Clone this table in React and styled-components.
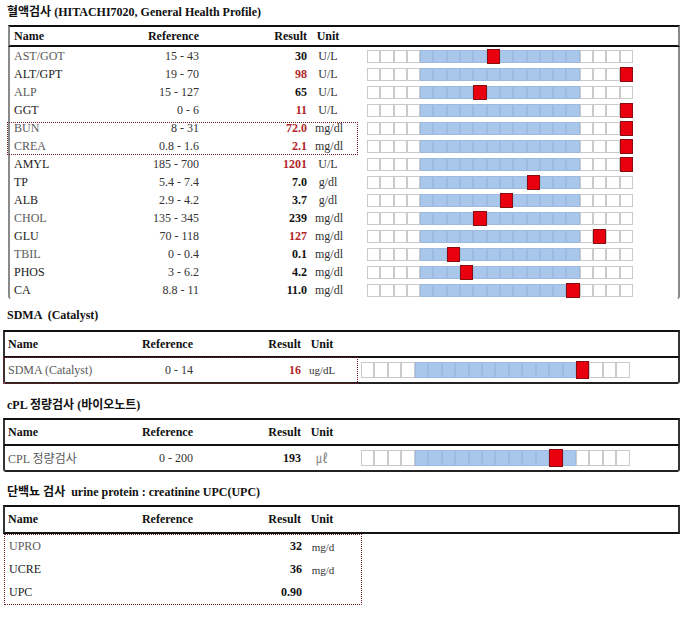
import styled, { createGlobalStyle } from 'styled-components'

const GlobalStyle = createGlobalStyle`
  body {
    margin: 0;
    background: #fff;
    font-family: "Liberation Serif", "Noto Sans CJK KR", serif;
    color: #222;
  }
`

const Page = styled.div`
  padding-top: 4px;
  padding-bottom: 8px;
  width: 695px;
`

const SectionTitle = styled.h2`
  margin: ${({ $top }) => $top}px 0 ${({ $bottom }) => $bottom}px 7px;
  font-size: 12px;
  line-height: 16px;
  font-weight: 700;
  color: #111;
  white-space: pre;
`

const Table = styled.div`
  margin-left: ${({ $left }) => $left}px;
  width: ${({ $width }) => $width}px;
`

const Head = styled.div`
  display: grid;
  grid-template-columns: 110px 75px 108px 60px 1fr;
  align-items: center;
  height: ${({ $h }) => $h}px;
  padding-left: ${({ $pad }) => $pad}px;
  border-top: 2px solid #111;
  border-bottom: 2px solid #111;
  border-left: 2px solid ${({ $side }) => $side};
  border-right: 2px solid ${({ $side }) => $side};
  font-weight: 700;
  font-size: 12px;
  color: #111;
`

const Body = styled.div`
  position: relative;
  border-left: 2px solid ${({ $side }) => $side || 'transparent'};
  border-right: 2px solid ${({ $side }) => $side || 'transparent'};
  border-bottom: ${({ $closed }) => ($closed ? '2px solid #222' : 'none')};
  border-radius: 0 0 3px 3px;
`

const Group = styled.div`
  width: 358px;
  box-sizing: border-box;
  margin-left: 1px;
  border: 1px dotted #7a1d22;
`

const Row = styled.div`
  display: grid;
  grid-template-columns: 110px 75px 108px 60px 1fr;
  align-items: center;
  height: ${({ $h }) => $h}px;
  padding-left: ${({ $pad }) => $pad}px;
  font-size: 12px;
`

const Name = styled.span`
  color: ${({ $dim }) => ($dim ? '#5a5a5a' : '#222')};
  white-space: nowrap;
`

const Ref = styled.span`
  text-align: right;
  color: ${({ $head }) => ($head ? '#111' : '#333')};
  white-space: nowrap;
`

const Result = styled.span`
  text-align: right;
  font-weight: 700;
  color: ${({ $high }) => ($high ? '#b0262b' : '#111')};
`

const Unit = styled.span`
  margin-left: 8px;
  width: 26px;
  text-align: center;
  white-space: nowrap;
  font-size: ${({ $small }) => ($small ? '11px' : '12px')};
  color: ${({ $faint, $head }) => ($head ? '#111' : $faint ? '#888' : '#333')};
`

const Track = styled.div`
  display: grid;
  grid-template-columns: repeat(20, ${({ $cell }) => $cell}px);
  height: ${({ $h }) => $h}px;
`

const Cell = styled.div`
  box-sizing: border-box;
  background: ${({ $kind }) =>
    $kind === 'mark' ? '#e8000e' : $kind === 'blue' ? '#a9c7ea' : '#fff'};
  border: 1px solid
    ${({ $kind }) =>
      $kind === 'mark' ? '#8a0d12' : $kind === 'blue' ? '#9dbbe0' : '#cacaca'};
  margin: ${({ $kind }) => ($kind === 'mark' ? '-1px 0' : '0')};
`

const Highlight = styled.div`
  position: absolute;
  left: ${({ $left }) => $left}px;
  top: ${({ $top }) => $top}px;
  width: ${({ $width }) => $width}px;
  height: ${({ $height }) => $height}px;
  border: 1px dotted #7a1d22;
  box-sizing: border-box;
  pointer-events: none;
`

const blood = [
  { name: 'AST/GOT', ref: '15 - 43', result: '30', unit: 'U/L', mark: 9, dim: true },
  { name: 'ALT/GPT', ref: '19 - 70', result: '98', unit: 'U/L', mark: 19, high: true },
  { name: 'ALP', ref: '15 - 127', result: '65', unit: 'U/L', mark: 8, dim: true },
  { name: 'GGT', ref: '0 - 6', result: '11', unit: 'U/L', mark: 19, high: true },
  { name: 'BUN', ref: '8 - 31', result: '72.0', unit: 'mg/dl', mark: 19, high: true, dim: true },
  { name: 'CREA', ref: '0.8 - 1.6', result: '2.1', unit: 'mg/dl', mark: 19, high: true, dim: true },
  { name: 'AMYL', ref: '185 - 700', result: '1201', unit: 'U/L', mark: 19, high: true },
  { name: 'TP', ref: '5.4 - 7.4', result: '7.0', unit: 'g/dl', mark: 12 },
  { name: 'ALB', ref: '2.9 - 4.2', result: '3.7', unit: 'g/dl', mark: 10 },
  { name: 'CHOL', ref: '135 - 345', result: '239', unit: 'mg/dl', mark: 8, dim: true },
  { name: 'GLU', ref: '70 - 118', result: '127', unit: 'mg/dl', mark: 17, high: true },
  { name: 'TBIL', ref: '0 - 0.4', result: '0.1', unit: 'mg/dl', mark: 6, dim: true },
  { name: 'PHOS', ref: '3 - 6.2', result: '4.2', unit: 'mg/dl', mark: 7 },
  { name: 'CA', ref: '8.8 - 11', result: '11.0', unit: 'mg/dl', mark: 15 },
]

const urine = [
  { name: 'UPRO', result: '32', unit: 'mg/d', dim: true },
  { name: 'UCRE', result: '36', unit: 'mg/d' },
  { name: 'UPC', result: '0.90', unit: '' },
]

const Bar = ({ mark, cell, h }) => (
  <Track $cell={cell} $h={h}>
    {Array.from({ length: 20 }, (_, i) => (
      <Cell key={i} $kind={i === mark ? 'mark' : i >= 4 && i < 16 ? 'blue' : 'white'} />
    ))}
  </Track>
)

const HeadRow = ({ h, pad, side }) => (
  <Head $h={h} $pad={pad} $side={side}>
    <span>Name</span>
    <Ref $head>Reference</Ref>
    <Result>Result</Result>
    <Unit $head>Unit</Unit>
    <span />
  </Head>
)

const App = () => (
  <Page>
    <GlobalStyle />

    <SectionTitle $top={0} $bottom={5}>혈액검사 (HITACHI7020, General Health Profile)</SectionTitle>
    <Table $left={8} $width={672}>
      <HeadRow h={18} pad={4} side="#8a8a8a" />
      <Body $side="#8a8a8a">
        {blood.map((r) => (
          <Row key={r.name} $h={18} $pad={4}>
            <Name $dim={r.dim}>{r.name}</Name>
            <Ref>{r.ref}</Ref>
            <Result $high={r.high}>{r.result}</Result>
            <Unit>{r.unit}</Unit>
            <Bar mark={r.mark} cell={13.3} h={13} />
          </Row>
        ))}
        <Highlight $left={-3} $top={75} $width={351} $height={33} />
      </Body>
    </Table>

    <SectionTitle $top={8} $bottom={7}>SDMA  (Catalyst)</SectionTitle>
    <Table $left={3} $width={677}>
      <HeadRow h={24} pad={3} side="#333" />
      <Body $side="#333" $closed>
        <Row $h={24} $pad={3}>
          <Name $dim>SDMA (Catalyst)</Name>
          <Ref>0 - 14</Ref>
          <Result $high>16</Result>
          <Unit $small>ug/dL</Unit>
          <Bar mark={16} cell={13.45} h={16} />
        </Row>
        <Highlight $left={-2} $top={-1} $width={355} $height={27} />
      </Body>
    </Table>

    <SectionTitle $top={13} $bottom={5}>cPL 정량검사 (바이오노트)</SectionTitle>
    <Table $left={3} $width={677}>
      <HeadRow h={24} pad={3} side="#333" />
      <Body $side="#333" $closed>
        <Row $h={24} $pad={3}>
          <Name $dim>CPL 정량검사</Name>
          <Ref>0 - 200</Ref>
          <Result>193</Result>
          <Unit $faint>㎕</Unit>
          <Bar mark={14} cell={13.45} h={16} />
        </Row>
      </Body>
    </Table>

    <SectionTitle $top={12} $bottom={5}>단백뇨 검사  urine protein : creatinine UPC(UPC)</SectionTitle>
    <Table $left={3} $width={677}>
      <HeadRow h={25} pad={3} side="#333" />
      <Group>
        {urine.map((r) => (
          <Row key={r.name} $h={23} $pad={4}>
            <Name $dim={r.dim}>{r.name}</Name>
            <Ref />
            <Result>{r.result}</Result>
            <Unit $small>{r.unit}</Unit>
          </Row>
        ))}
      </Group>
    </Table>
  </Page>
)

export default App
